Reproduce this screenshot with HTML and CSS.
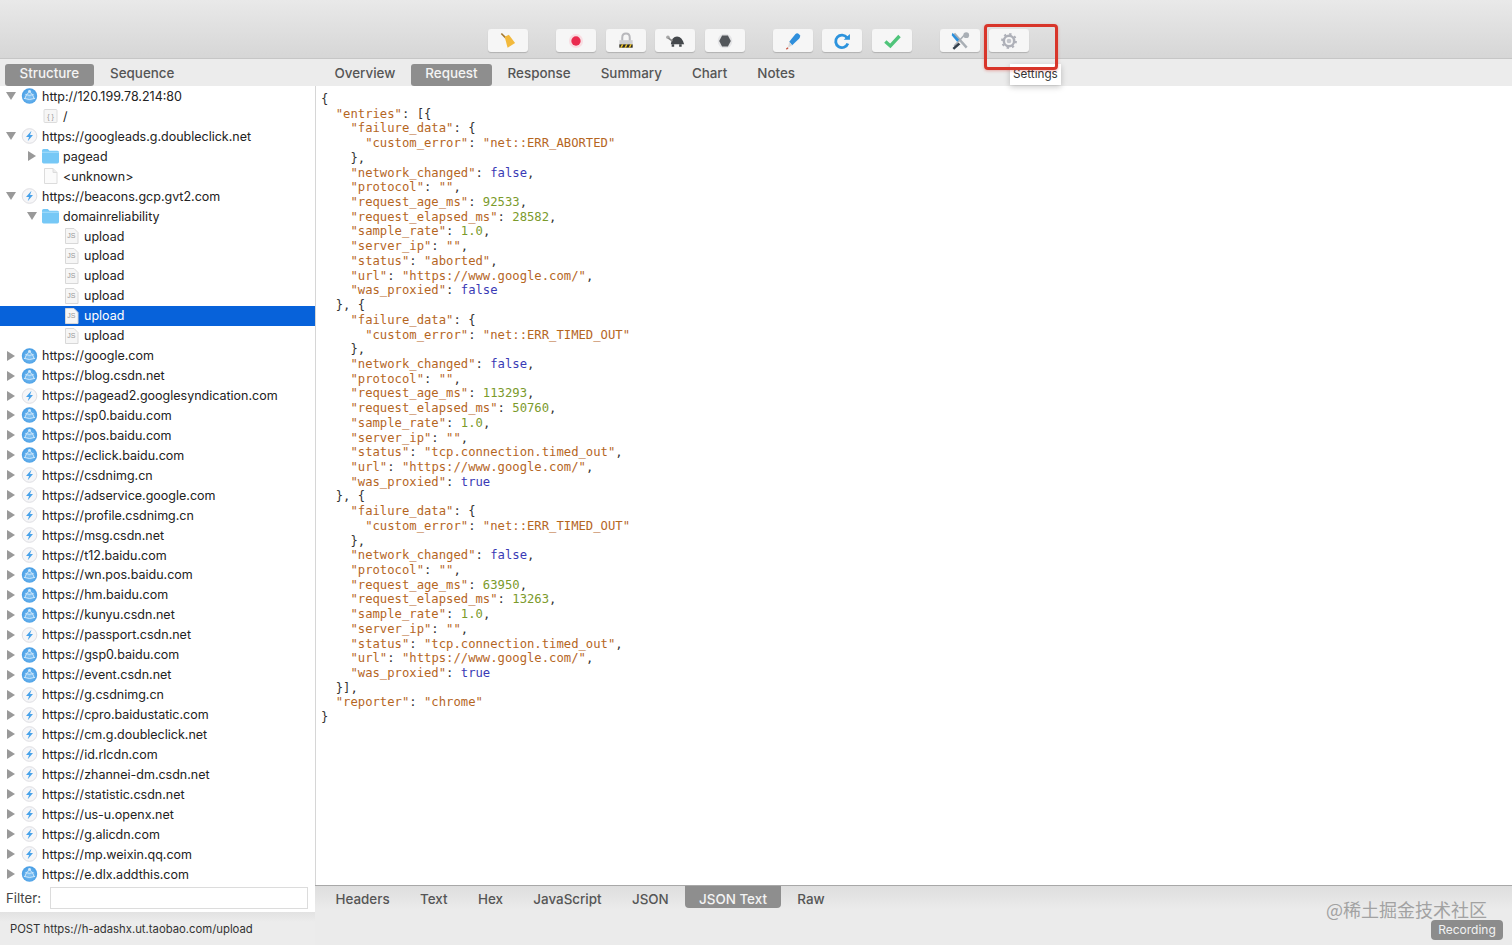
FILE: index.html
```html
<!DOCTYPE html>
<html lang="en">
<head>
    <meta charset="UTF-8">
    <title>Charles</title>
    <link rel="stylesheet" href="styles.css">
</head>
<body>
<svg class="defs" width="0" height="0">
    <defs>
        <radialGradient id="globefill" cx="50%" cy="55%" r="55%">
            <stop offset="0" stop-color="#84c4f4"/>
            <stop offset="1" stop-color="#459ce4"/>
        </radialGradient>
    </defs>
    <symbol id="globe" viewBox="0 0 17 17">
        <circle cx="8.5" cy="8.5" r="8.2" fill="url(#globefill)"/>
        <circle cx="8.5" cy="3.6" r="1.5" fill="#d5ebfb"/>
        <path d="M8.5 4 Q4.5 7 3.6 11.2 M8.5 4 Q12.5 7 13.4 11.2 M2.6 11 Q8.5 13.4 14.4 11 M4.2 7 Q8.5 8.6 12.8 7" stroke="#d5ebfb" stroke-width="1" fill="none"/>
    </symbol>
    <symbol id="bolt" viewBox="0 0 17 17">
        <circle cx="8.5" cy="8.5" r="7.8" fill="#f6f6f8" stroke="#dcdce0" stroke-width="1"/>
        <path d="M10.6 3 L4.8 9.6 H8 L6.6 14 L12.2 7.4 H9.1Z" fill="#48a2ea"/>
    </symbol>
    <symbol id="folder" viewBox="0 0 16 14">
        <path d="M0 2 Q0 .5 1.5 .5 H5.5 L7 2 H14.5 Q16 2 16 3.5 V12.5 Q16 14 14.5 14 H1.5 Q0 14 0 12.5Z" fill="#76c8f6"/>
        <path d="M0 3.5 H16" stroke="#a5dcf9" stroke-width="1"/>
    </symbol>
    <symbol id="page" viewBox="0 0 14 16">
        <path d="M1 .5 H9.5 L13.5 4.5 V15.5 H1Z" fill="#fbfbfb" stroke="#dcdcdc"/>
        <path d="M9.5 .5 V4.5 H13.5" fill="#ececec" stroke="#dcdcdc"/>
    </symbol>
    <symbol id="jsfile" viewBox="0 0 14 16">
        <path d="M1 .5 H9.5 L13.5 4.5 V15.5 H1Z" fill="#f6f6f6" stroke="#d8d8d8"/>
        <text x="6.8" y="9.5" class="fileglyph">JS</text>
    </symbol>
    <symbol id="jsonfile" viewBox="0 0 14 16">
        <rect x=".5" y="1.5" width="13" height="13" rx="1" fill="#f6f6f6" stroke="#dcdcdc"/>
        <text x="7" y="10.5" class="fileglyph">{ }</text>
    </symbol>
</svg>

<div class="toolbar">
    <div class="tool-group">
        <div class="tool"><svg viewBox="0 0 24 24"><path d="M4 3 L9.5 8.5" stroke="#a5792f" stroke-width="2"/><path d="M8 7 L13 4.5 L20.5 14.5 L11.5 20Z" fill="#f2b93c"/></svg></div>
    </div>
    <div class="tool-group">
        <div class="tool"><svg viewBox="0 0 24 24"><circle cx="12" cy="12" r="8.5" fill="#f8dde2"/><circle cx="12" cy="12" r="5.6" fill="#ea2a4e"/></svg></div>
        <div class="tool"><svg viewBox="0 0 24 24"><path d="M7.5 12 V8 Q7.5 3 12 3 Q16.5 3 16.5 8 V12" fill="none" stroke="#b8b8bc" stroke-width="2.4"/><rect x="4" y="11" width="16" height="5" fill="#cfcfd1"/><rect x="4" y="16" width="16" height="4" fill="#2e2a1e"/><path d="M5 20 L7 16 H9 L7 20Z M10 20 L12 16 H14 L12 20Z M15 20 L17 16 H19 L17 20Z" fill="#edc52c"/></svg></div>
        <div class="tool"><svg viewBox="0 0 24 24"><circle cx="3.5" cy="7.5" r="2.2" fill="#a8a8a8"/><path d="M7 16 Q8 6.5 14.5 6.5 Q20.5 6.5 23 16Z" fill="#44484c"/><path d="M8 16 H11 V19 H8Z M17 16 H20 V19 H17Z" fill="#44484c"/><path d="M4 8.5 L9 12" stroke="#888" stroke-width="2"/></svg></div>
        <div class="tool"><svg viewBox="0 0 24 24"><circle cx="12" cy="12" r="8.8" fill="#e4e4e6"/><path d="M8.5 5.5 H15.5 L19 12 L15.5 18.5 H8.5 L5 12Z" fill="#53575b"/></svg></div>
    </div>
    <div class="tool-group">
        <div class="tool"><svg viewBox="0 0 24 24"><path d="M15 3.5 Q17 2 19 3.5 L20.5 5.5 Q21 7.5 19.5 9 L11 17 L7.5 13Z" fill="#2f8fdc"/><path d="M7.5 13 L11 17 L6 20Z" fill="#d8d8d8"/><path d="M6 20 L4 22" stroke="#c9523f" stroke-width="1.6"/></svg></div>
        <div class="tool"><svg viewBox="0 0 24 24"><path d="M18 8 A7.5 7.5 0 1 0 19 15" fill="none" stroke="#2c93dd" stroke-width="3.4"/><path d="M14 10.5 H21.5 V3.5Z" fill="#2c93dd"/></svg></div>
        <div class="tool"><svg viewBox="0 0 24 24"><path d="M4 12.5 L10 18 L21 6" fill="none" stroke="#4fc47a" stroke-width="4"/></svg></div>
    </div>
    <div class="tool-group">
        <div class="tool"><svg viewBox="0 0 24 24"><path d="M5 3 L20 20" stroke="#a9afb5" stroke-width="3"/><path d="M19 3 L5 18" stroke="#a9afb5" stroke-width="2"/><path d="M3 2 L11 10.5 L8.5 13 L2 5Z" fill="#2a8fdc"/><path d="M10 14 L3 20.5 L5 22.5 L12.5 16Z" fill="#34404c"/><circle cx="19.5" cy="5" r="3.4" fill="#a9afb5"/></svg></div>
        <div class="tool"><svg viewBox="0 0 24 24"><circle cx="12" cy="12" r="6.2" fill="none" stroke="#aeb0b8" stroke-width="3"/><circle cx="12" cy="12" r="8.4" fill="none" stroke="#aeb0b8" stroke-width="2.2" stroke-dasharray="2.8 3.8"/><circle cx="12" cy="12" r="2.8" fill="#c2c4ca"/></svg></div>
    </div>
</div>

<div class="main">
    <div class="left">
        <div class="tabs left-tabs">
            <span class="tab active">Structure</span>
            <span class="tab">Sequence</span>
        </div>
        <div class="tree">
            <div class="row"><i class="twisty open"></i><svg class="ico"><use href="#globe"/></svg><span>http://120.199.78.214:80</span></div>
            <div class="row lvl1"><i class="twisty none"></i><svg class="ico"><use href="#jsonfile"/></svg><span>/</span></div>
            <div class="row"><i class="twisty open"></i><svg class="ico"><use href="#bolt"/></svg><span>https://googleads.g.doubleclick.net</span></div>
            <div class="row lvl1"><i class="twisty shut"></i><svg class="ico"><use href="#folder"/></svg><span>pagead</span></div>
            <div class="row lvl1"><i class="twisty none"></i><svg class="ico"><use href="#page"/></svg><span>&lt;unknown&gt;</span></div>
            <div class="row"><i class="twisty open"></i><svg class="ico"><use href="#bolt"/></svg><span>https://beacons.gcp.gvt2.com</span></div>
            <div class="row lvl1"><i class="twisty open"></i><svg class="ico"><use href="#folder"/></svg><span>domainreliability</span></div>
            <div class="row lvl2"><i class="twisty none"></i><svg class="ico"><use href="#jsfile"/></svg><span>upload</span></div>
            <div class="row lvl2"><i class="twisty none"></i><svg class="ico"><use href="#jsfile"/></svg><span>upload</span></div>
            <div class="row lvl2"><i class="twisty none"></i><svg class="ico"><use href="#jsfile"/></svg><span>upload</span></div>
            <div class="row lvl2"><i class="twisty none"></i><svg class="ico"><use href="#jsfile"/></svg><span>upload</span></div>
            <div class="row lvl2 selected"><i class="twisty none"></i><svg class="ico"><use href="#jsfile"/></svg><span>upload</span></div>
            <div class="row lvl2"><i class="twisty none"></i><svg class="ico"><use href="#jsfile"/></svg><span>upload</span></div>
            <div class="row"><i class="twisty shut"></i><svg class="ico"><use href="#globe"/></svg><span>https://google.com</span></div>
            <div class="row"><i class="twisty shut"></i><svg class="ico"><use href="#globe"/></svg><span>https://blog.csdn.net</span></div>
            <div class="row"><i class="twisty shut"></i><svg class="ico"><use href="#bolt"/></svg><span>https://pagead2.googlesyndication.com</span></div>
            <div class="row"><i class="twisty shut"></i><svg class="ico"><use href="#globe"/></svg><span>https://sp0.baidu.com</span></div>
            <div class="row"><i class="twisty shut"></i><svg class="ico"><use href="#globe"/></svg><span>https://pos.baidu.com</span></div>
            <div class="row"><i class="twisty shut"></i><svg class="ico"><use href="#globe"/></svg><span>https://eclick.baidu.com</span></div>
            <div class="row"><i class="twisty shut"></i><svg class="ico"><use href="#bolt"/></svg><span>https://csdnimg.cn</span></div>
            <div class="row"><i class="twisty shut"></i><svg class="ico"><use href="#bolt"/></svg><span>https://adservice.google.com</span></div>
            <div class="row"><i class="twisty shut"></i><svg class="ico"><use href="#bolt"/></svg><span>https://profile.csdnimg.cn</span></div>
            <div class="row"><i class="twisty shut"></i><svg class="ico"><use href="#bolt"/></svg><span>https://msg.csdn.net</span></div>
            <div class="row"><i class="twisty shut"></i><svg class="ico"><use href="#bolt"/></svg><span>https://t12.baidu.com</span></div>
            <div class="row"><i class="twisty shut"></i><svg class="ico"><use href="#globe"/></svg><span>https://wn.pos.baidu.com</span></div>
            <div class="row"><i class="twisty shut"></i><svg class="ico"><use href="#globe"/></svg><span>https://hm.baidu.com</span></div>
            <div class="row"><i class="twisty shut"></i><svg class="ico"><use href="#globe"/></svg><span>https://kunyu.csdn.net</span></div>
            <div class="row"><i class="twisty shut"></i><svg class="ico"><use href="#bolt"/></svg><span>https://passport.csdn.net</span></div>
            <div class="row"><i class="twisty shut"></i><svg class="ico"><use href="#globe"/></svg><span>https://gsp0.baidu.com</span></div>
            <div class="row"><i class="twisty shut"></i><svg class="ico"><use href="#globe"/></svg><span>https://event.csdn.net</span></div>
            <div class="row"><i class="twisty shut"></i><svg class="ico"><use href="#bolt"/></svg><span>https://g.csdnimg.cn</span></div>
            <div class="row"><i class="twisty shut"></i><svg class="ico"><use href="#bolt"/></svg><span>https://cpro.baidustatic.com</span></div>
            <div class="row"><i class="twisty shut"></i><svg class="ico"><use href="#bolt"/></svg><span>https://cm.g.doubleclick.net</span></div>
            <div class="row"><i class="twisty shut"></i><svg class="ico"><use href="#bolt"/></svg><span>https://id.rlcdn.com</span></div>
            <div class="row"><i class="twisty shut"></i><svg class="ico"><use href="#bolt"/></svg><span>https://zhannei-dm.csdn.net</span></div>
            <div class="row"><i class="twisty shut"></i><svg class="ico"><use href="#bolt"/></svg><span>https://statistic.csdn.net</span></div>
            <div class="row"><i class="twisty shut"></i><svg class="ico"><use href="#bolt"/></svg><span>https://us-u.openx.net</span></div>
            <div class="row"><i class="twisty shut"></i><svg class="ico"><use href="#bolt"/></svg><span>https://g.alicdn.com</span></div>
            <div class="row"><i class="twisty shut"></i><svg class="ico"><use href="#bolt"/></svg><span>https://mp.weixin.qq.com</span></div>
            <div class="row"><i class="twisty shut"></i><svg class="ico"><use href="#globe"/></svg><span>https://e.dlx.addthis.com</span></div>
        </div>
        <div class="filter">
            <label>Filter:</label>
            <div class="filter-input"></div>
        </div>
        <div class="status">POST https://h-adashx.ut.taobao.com/upload</div>
    </div>
    <div class="right">
        <div class="tabs top-tabs">
            <span class="tab">Overview</span>
            <span class="tab active">Request</span>
            <span class="tab">Response</span>
            <span class="tab">Summary</span>
            <span class="tab">Chart</span>
            <span class="tab">Notes</span>
        </div>
<pre class="code">{
  <b>"entries"</b>: [{
    <b>"failure_data"</b>: {
      <b>"custom_error"</b>: <b>"net::ERR_ABORTED"</b>
    },
    <b>"network_changed"</b>: <u>false</u>,
    <b>"protocol"</b>: <b>""</b>,
    <b>"request_age_ms"</b>: <em>92533</em>,
    <b>"request_elapsed_ms"</b>: <em>28582</em>,
    <b>"sample_rate"</b>: <em>1.0</em>,
    <b>"server_ip"</b>: <b>""</b>,
    <b>"status"</b>: <b>"aborted"</b>,
    <b>"url"</b>: <b>"https://www.google.com/"</b>,
    <b>"was_proxied"</b>: <u>false</u>
  }, {
    <b>"failure_data"</b>: {
      <b>"custom_error"</b>: <b>"net::ERR_TIMED_OUT"</b>
    },
    <b>"network_changed"</b>: <u>false</u>,
    <b>"protocol"</b>: <b>""</b>,
    <b>"request_age_ms"</b>: <em>113293</em>,
    <b>"request_elapsed_ms"</b>: <em>50760</em>,
    <b>"sample_rate"</b>: <em>1.0</em>,
    <b>"server_ip"</b>: <b>""</b>,
    <b>"status"</b>: <b>"tcp.connection.timed_out"</b>,
    <b>"url"</b>: <b>"https://www.google.com/"</b>,
    <b>"was_proxied"</b>: <u>true</u>
  }, {
    <b>"failure_data"</b>: {
      <b>"custom_error"</b>: <b>"net::ERR_TIMED_OUT"</b>
    },
    <b>"network_changed"</b>: <u>false</u>,
    <b>"protocol"</b>: <b>""</b>,
    <b>"request_age_ms"</b>: <em>63950</em>,
    <b>"request_elapsed_ms"</b>: <em>13263</em>,
    <b>"sample_rate"</b>: <em>1.0</em>,
    <b>"server_ip"</b>: <b>""</b>,
    <b>"status"</b>: <b>"tcp.connection.timed_out"</b>,
    <b>"url"</b>: <b>"https://www.google.com/"</b>,
    <b>"was_proxied"</b>: <u>true</u>
  }],
  <b>"reporter"</b>: <b>"chrome"</b>
}</pre>
        <div class="tabs bottom-tabs">
            <span class="tab">Headers</span>
            <span class="tab">Text</span>
            <span class="tab">Hex</span>
            <span class="tab">JavaScript</span>
            <span class="tab">JSON</span>
            <span class="tab active">JSON Text</span>
            <span class="tab">Raw</span>
        </div>
    </div>
</div>

<div class="tooltip">Settings</div>
<div class="highlight"></div>
<div class="watermark">@稀土掘金技术社区</div>
<div class="recording">Recording</div>
</body>
</html>
```

FILE: styles.css
```css
html, body {
    margin: 0;
    height: 945px;
    overflow: hidden;
}
body {
    position: relative;
    font-family: "Inter", "Liberation Sans", sans-serif;
    font-size: 12.5px;
    color: #2a2a2a;
    background: #ececec;
}
.defs {
    position: absolute;
}
.fileglyph {
    font-family: "Liberation Sans", sans-serif;
    font-size: 7px;
    fill: #999;
    text-anchor: middle;
}

/* toolbar */
.toolbar {
    height: 59px;
    box-sizing: border-box;
    padding: 29px 0 0 488px;
    display: flex;
    align-items: flex-start;
    gap: 28px;
    background: linear-gradient(#e9e9e9, #d6d6d6);
    border-bottom: 1px solid #c6c6c6;
}
.tool-group {
    display: flex;
    gap: 9.5px;
}
.tool {
    width: 40px;
    height: 23px;
    background: #f6f6f6;
    border-radius: 3px;
    box-shadow: 0 1px 1px rgba(0, 0, 0, 0.18);
    display: flex;
    justify-content: center;
    align-items: center;
}
.tool svg {
    width: 20px;
    height: 20px;
}

/* layout */
.main {
    display: flex;
    height: 886px;
}
.left {
    width: 315px;
    flex: none;
    display: flex;
    flex-direction: column;
    background: #fff;
}
.right {
    flex: 1;
    display: flex;
    flex-direction: column;
    min-width: 0;
}

/* tabs */
.tabs {
    display: flex;
    background: #ececec;
    color: #555;
    font-size: 13.4px;
    font-weight: 500;
}
.tab {
    padding: 0 14.5px;
    line-height: 18px;
    white-space: nowrap;
}
.tab.active {
    background: #8e8e8e;
    color: #f4f4f4;
    border-radius: 3px;
}
.left-tabs {
    height: 27px;
    flex: none;
    box-sizing: border-box;
    padding: 5px 0 0 5px;
    gap: 2px;
}
.top-tabs {
    height: 27px;
    flex: none;
    box-sizing: border-box;
    padding: 5px 0 0 5px;
    gap: 1px;
}
.bottom-tabs {
    height: 60px;
    flex: none;
    box-sizing: border-box;
    padding: 0 0 0 6px;
    border-top: 1px solid #a8a8a8;
    background: linear-gradient(#dedede, #ebebeb 40%);
    gap: 1.4px;
}
.bottom-tabs .tab {
    height: 22px;
    line-height: 26px;
}
.bottom-tabs .tab.active {
    border-radius: 0 0 4px 4px;
}

/* tree */
.tree {
    height: 799px;
    flex: none;
    box-sizing: border-box;
    padding-top: 0.5px;
    overflow: hidden;
}
.row {
    height: 19.95px;
    display: flex;
    align-items: center;
    padding-left: 5px;
    white-space: nowrap;
    color: #222;
}
.lvl1 {
    padding-left: 26px;
}
.lvl2 {
    padding-left: 47px;
}
.selected {
    background: #0762da;
    color: #fff;
}
.twisty {
    width: 16px;
    height: 10px;
    flex: none;
    position: relative;
}
.twisty.open::before {
    content: "";
    position: absolute;
    left: 1px;
    top: 1px;
    border-left: 5px solid transparent;
    border-right: 5px solid transparent;
    border-top: 8px solid #999;
}
.twisty.shut::before {
    content: "";
    position: absolute;
    left: 2px;
    top: 0;
    border-top: 5px solid transparent;
    border-bottom: 5px solid transparent;
    border-left: 8px solid #999;
}
.ico {
    width: 17px;
    height: 16px;
    flex: none;
    margin-right: 4px;
}

/* filter */
.filter {
    height: 27px;
    flex: none;
    display: flex;
    align-items: flex-start;
    box-sizing: border-box;
    padding: 2px 0 0 6px;
    gap: 9px;
    color: #444;
    font-size: 13.2px;
}
.filter label {
    line-height: 22px;
}
.filter-input {
    width: 256px;
    height: 20px;
    border: 1px solid #dcdcdc;
    background: #fff;
}

/* code view */
.code {
    flex: 1;
    margin: 0;
    padding: 6px 0 0 5px;
    background: #fff;
    border-left: 1px solid #d6d6d6;
    font-family: "DejaVu Sans Mono", "Liberation Mono", monospace;
    font-size: 12.22px;
    line-height: 14.72px;
    color: #333;
    overflow: hidden;
}
.code b {
    font-weight: normal;
    color: #b5661f;
}
.code u {
    text-decoration: none;
    color: #3a3ab5;
}
.code em {
    font-style: normal;
    color: #7b9a2b;
}

/* status bar */
.status {
    height: 33px;
    flex: none;
    overflow: hidden;
    line-height: 34px;
    padding-left: 10px;
    font-size: 11.3px;
    color: #333;
    background: linear-gradient(#e2e2e2, #ececec 30%);
}

/* overlays */
.tooltip {
    position: absolute;
    left: 1010px;
    top: 64px;
    width: 51px;
    height: 21px;
    line-height: 20px;
    box-sizing: border-box;
    padding-left: 3px;
    background: #fff;
    font-size: 11.7px;
    color: #333;
    box-shadow: 0 2px 6px rgba(0, 0, 0, 0.22);
}
.highlight {
    position: absolute;
    left: 984px;
    top: 24px;
    width: 68px;
    height: 40px;
    border: 3px solid #d8352a;
    border-radius: 4px;
    box-shadow: 0 1px 3px rgba(216, 53, 42, 0.35);
}
.watermark {
    position: absolute;
    left: 1326px;
    top: 897px;
    font-family: "Noto Sans CJK SC", sans-serif;
    font-size: 18px;
    line-height: 24px;
    color: #a2a2a2;
}
.recording {
    position: absolute;
    left: 1431px;
    top: 920px;
    width: 72px;
    height: 20px;
    line-height: 19px;
    text-align: center;
    font-size: 12px;
    color: #f2f2f2;
    background: #8c8c8c;
    border-radius: 4px;
}
```
